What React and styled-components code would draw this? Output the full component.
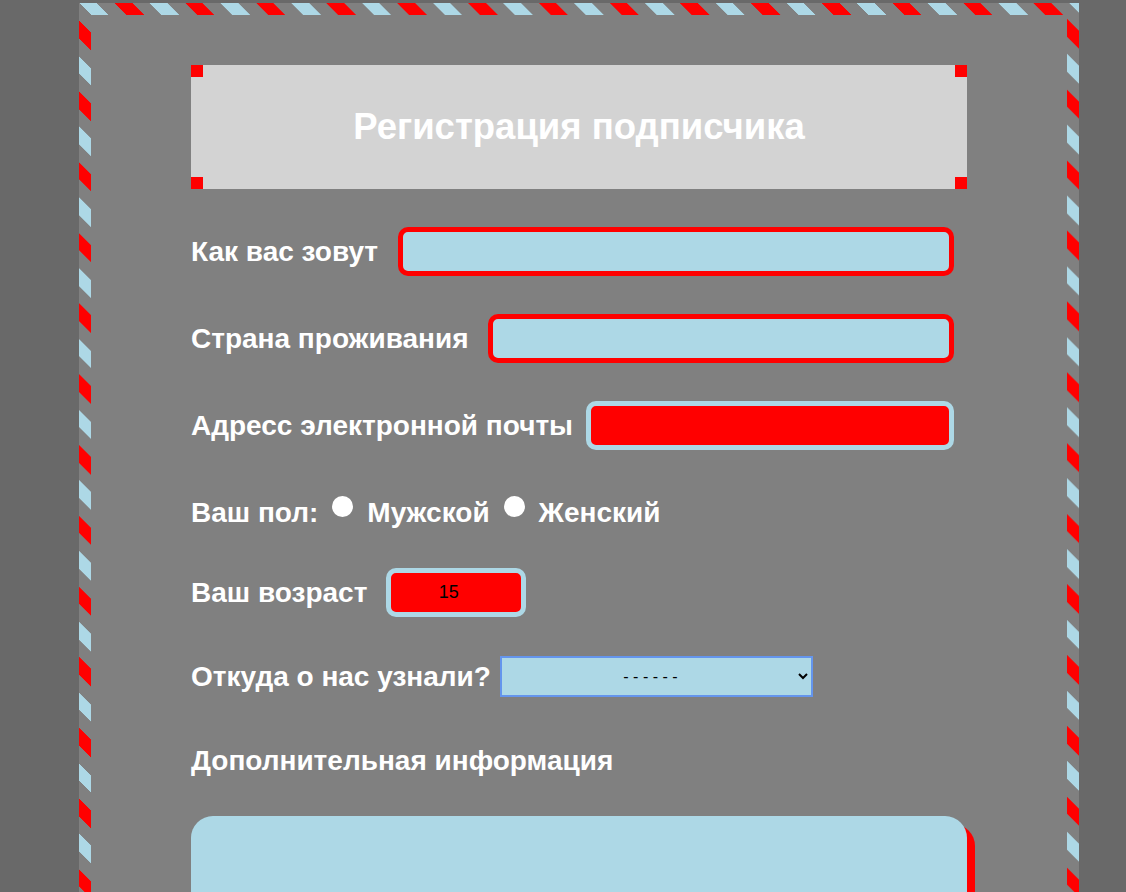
import React from "react";
import styled, { createGlobalStyle } from "styled-components";

const GlobalStyle = createGlobalStyle`
  body {
    margin: 0;
    background: #696969;
    font-family: "Liberation Sans", Arial, sans-serif;
  }
`;

const Sheet = styled.div`
  box-sizing: border-box;
  width: 1000px;
  margin: 3px 0 0 79px;
  padding: 50px 100px 50px;
  border: 12px solid transparent;
  background: linear-gradient(#808080, #808080) padding-box,
    repeating-linear-gradient(
        45deg,
        lightblue 0 12.5px,
        #808080 12.5px 25px,
        red 25px 37.5px,
        #808080 37.5px 50px
      )
      0 0 / 707.107px 707.107px border-box;
`;

const Title = styled.div`
  height: 124px;
  display: flex;
  align-items: center;
  justify-content: center;
  margin-bottom: 38px;
  background: linear-gradient(red, red) left top / 12px 12px no-repeat,
    linear-gradient(red, red) right top / 12px 12px no-repeat,
    linear-gradient(red, red) left bottom / 12px 12px no-repeat,
    linear-gradient(red, red) right bottom / 12px 12px no-repeat, lightgray;
  h1 {
    margin: 0;
    color: white;
    font-size: 36.5px;
    font-weight: bold;
  }
`;

const Row = styled.div`
  display: flex;
  align-items: center;
  min-height: ${(props) => props.h || 49}px;
  margin-bottom: ${(props) => props.mb ?? 38}px;
  padding-right: 13px;
  color: white;
  font-size: 28px;
  font-weight: bold;
`;

const Label = styled.label`
  margin-right: ${(props) => props.gap ?? 14}px;
  white-space: nowrap;
`;

const TextInput = styled.input`
  flex: 1;
  box-sizing: border-box;
  height: 49px;
  border: 5px solid ${(props) => (props.inverted ? "lightblue" : "red")};
  border-radius: 10px;
  background: ${(props) => (props.inverted ? "red" : "lightblue")};
  outline: none;
  font: 18px "Liberation Sans", Arial, sans-serif;
`;

const AgeInput = styled(TextInput)`
  flex: none;
  width: 140px;
  text-align: center;
  color: black;
`;

const Radio = styled.input`
  appearance: none;
  width: 21px;
  height: 21px;
  margin: 0 14px 12px;
  border-radius: 50%;
  background: white;
`;

const Select = styled.select`
  width: 313px;
  height: 41px;
  border: 2px solid cornflowerblue;
  border-radius: 0;
  background: lightblue;
  text-align-last: center;
  font: 16px "Liberation Sans", Arial, sans-serif;
  color: black;
`;

const Heading = styled.div`
  color: white;
  font-size: 28px;
  font-weight: bold;
  line-height: 32px;
  margin-bottom: 39px;
`;

const Notes = styled.textarea`
  display: block;
  box-sizing: border-box;
  width: 776px;
  height: 260px;
  border: none;
  border-radius: 22px;
  background: lightblue;
  box-shadow: 8px 8px 0 red;
  resize: none;
  outline: none;
`;

export default function App() {
  return (
    <>
      <GlobalStyle />
      <Sheet>
        <Title>
          <h1>Регистрация подписчика</h1>
        </Title>
        <Row>
          <Label gap={20}>Как вас зовут</Label>
          <TextInput type="text" />
        </Row>
        <Row>
          <Label gap={19}>Страна проживания</Label>
          <TextInput type="text" />
        </Row>
        <Row>
          <Label gap={13}>Адресс электронной почты</Label>
          <TextInput type="email" inverted />
        </Row>
        <Row mb={31}>
          <span>Ваш пол:</span>
          <Radio type="radio" name="sex" />
          <span>Мужской</span>
          <Radio type="radio" name="sex" />
          <span>Женский</span>
        </Row>
        <Row mb={39}>
          <Label gap={19}>Ваш возраст</Label>
          <AgeInput type="number" inverted defaultValue={15} />
        </Row>
        <Row h={41} mb={48}>
          <Label gap={9}>Откуда о нас узнали?</Label>
          <Select defaultValue="none">
            <option value="none">- - - - - -</option>
            <option value="friends">От друзей</option>
            <option value="web">Из интернета</option>
          </Select>
        </Row>
        <Heading>Дополнительная информация</Heading>
        <Notes />
      </Sheet>
    </>
  );
}
